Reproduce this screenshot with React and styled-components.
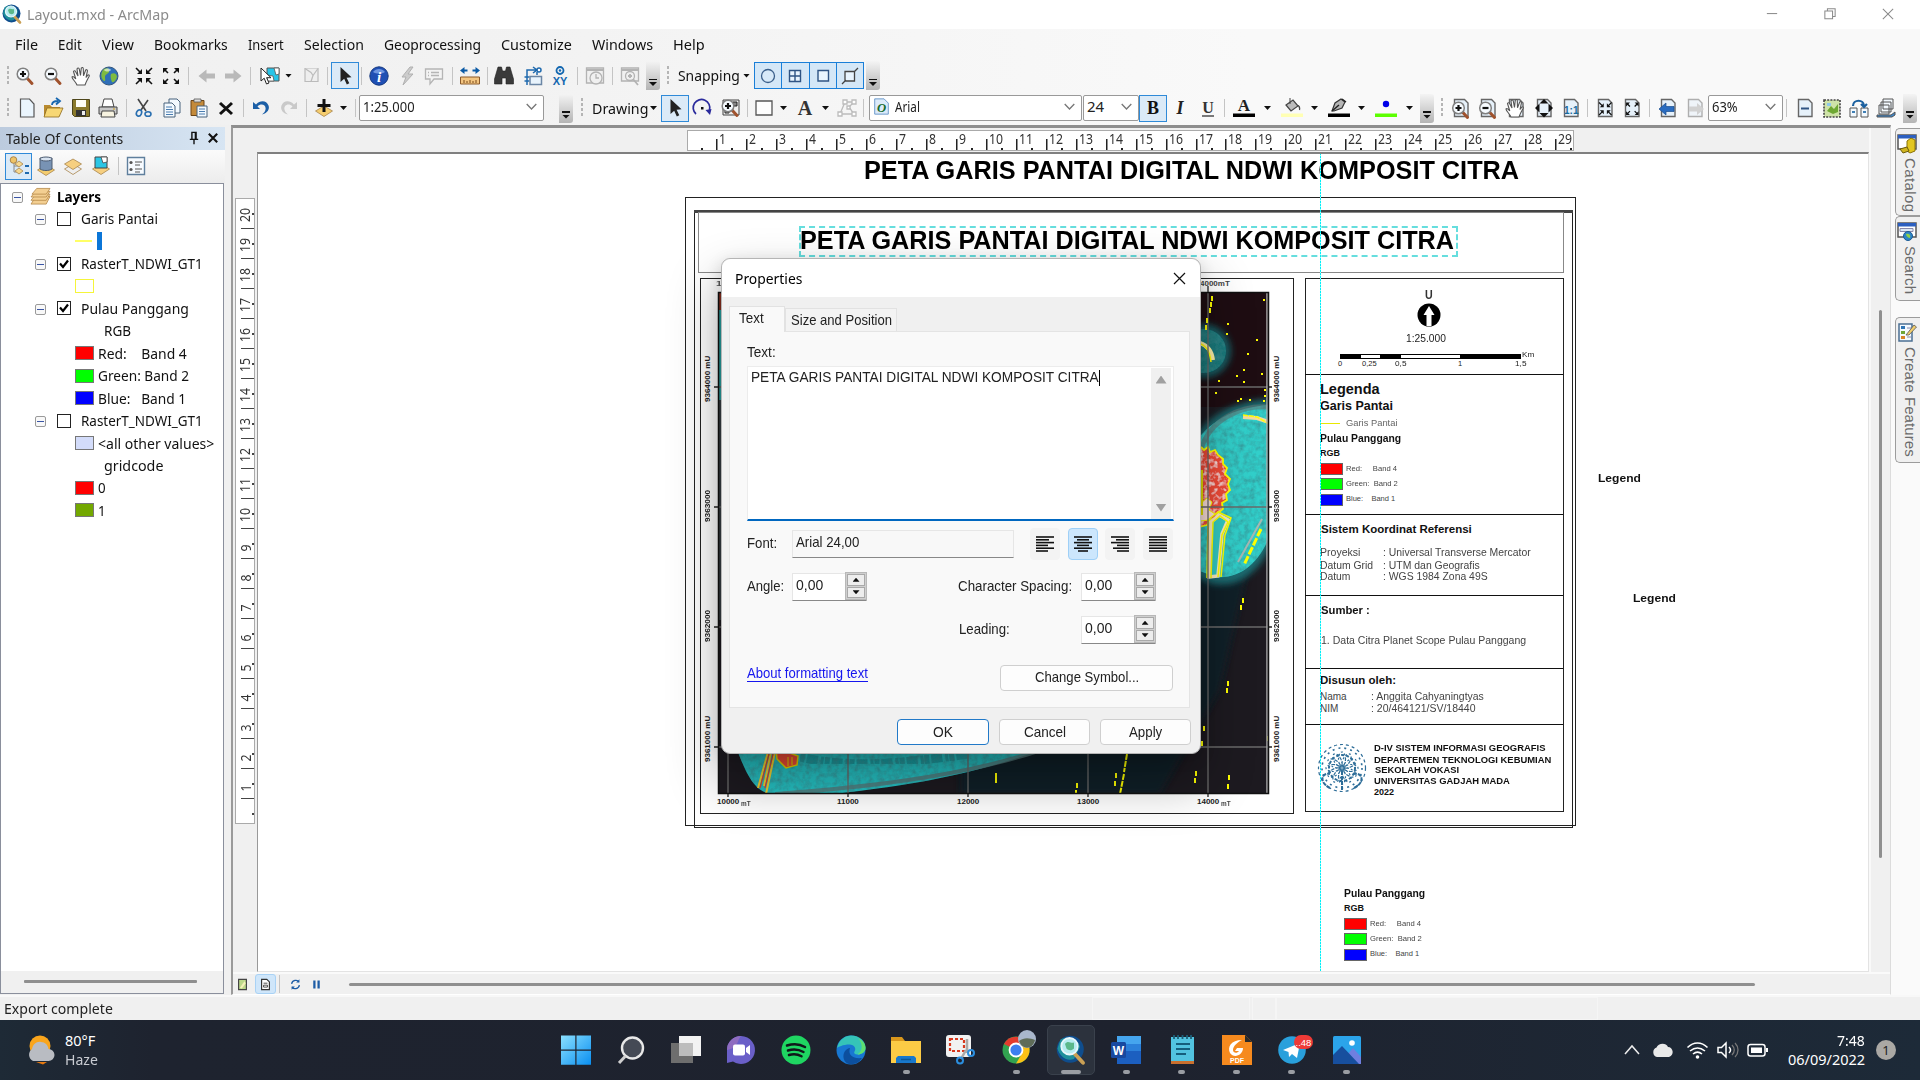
import React, { useLayoutEffect, useRef, useState } from "react";
import styled, { createGlobalStyle, css } from "styled-components";

const UI = `"Noto Sans", "Open Sans", sans-serif`;
const ARIAL = `"Liberation Sans", Arial, sans-serif`;

const Global = createGlobalStyle`
  html, body { margin: 0; padding: 0; overflow: hidden; }
  body { width: 1920px; height: 1080px; font-family: ${UI}; font-size: 15px; color: #111; }
  * { box-sizing: border-box; }
`;

/* ---------- text squeezed to a known width ---------- */
const FitBox = styled.span`
  display: inline-block;
  flex: none;
  white-space: pre;
  line-height: 1;
`;
const FitInner = styled.span`
  display: inline-block;
  white-space: pre;
  transform-origin: 0 50%;
`;
function Fit({ w, children }) {
  const ref = useRef(null);
  const [k, setK] = useState(1);
  useLayoutEffect(() => {
    const n = ref.current.offsetWidth;
    if (n) setK(w / n);
  }, [w, children]);
  return (
    <FitBox style={{ width: w }}>
      <FitInner ref={ref} style={{ transform: `scaleX(${k})` }}>{children}</FitInner>
    </FitBox>
  );
}

/* ---------- icons ---------- */
const page = <path d="M3.5 1.5h10l3.5 3.500v13.500h-13.500z" fill="#e6f1fa" stroke="#666" strokeWidth="1.400" />;
const lens = (x, y, sign) => (
  <g>
    <path d={`M${x + 3.5} ${y + 3.5}l5.500 6`} stroke="#a0522d" strokeWidth="3" strokeLinecap="round" />
    <circle cx={x} cy={y} r="5.800" fill="#f6fbff" stroke="#808080" strokeWidth="1.500" />
    <path d={`M${x - 3} ${y}h6${sign ? `M${x} ${y - 3}v6` : ""}`} stroke="#111" strokeWidth="2.200" />
  </g>
);
const arrowsIn = (c) => (
  <g stroke={c} strokeWidth="1.600" fill={c}>
    <path d="M2 2l4 4M18 2l-4 4M2 18l4-4M18 18l-4-4" />
    <path d="M8 3v5H3zM12 3v5h5zM8 17v-5H3zM12 17v-5h5z" stroke="none" />
  </g>
);
const arrowsOut = (c) => (
  <g stroke={c} strokeWidth="1.600" fill={c}>
    <path d="M7 7L3.500 3.500M13 7l3.500-3.500M7 13l-3.500 3.500M13 13l3.500 3.500" />
    <path d="M2 7V2h5zM18 7V2h-5zM2 13v5h5zM18 13v5h-5z" stroke="none" />
  </g>
);
const hand = <path d="M6 19c-1-3-5-6-5-8 1-1 2 0 3.800 2L2.500 5.500c.8-1.400 1.800-.6 2.200.3L7 10 6 3c.7-1.600 2-1.300 2.300.2L9.500 9.500l.8-7.300c.9-1.200 2-.6 2 .7l.2 6.800 2.200-5.700c1-.9 2 0 1.700 1.200L15 11.500l2-2.500c1-.5 1.600.3 1.200 1.200-1.500 2.800-3 5.300-4.200 8.800z" fill="#fff" stroke="#555" strokeWidth="1.100" />;
const diamond = (y, f) => <path d={`M10 ${y - 5}l8.500 5-8.500 5.500-8.500-5.500z`} fill={f} stroke="#a8854c" strokeWidth="0.800" />;
const pointer = <path d="M5.500 1v15l3.700-3.300 2.600 5.800 2.500-1.200-2.700-5.600 4.900-.5z" fill="#222" />;

const G = {
  zoomIn: lens(8, 8, 1),
  zoomOut: lens(8, 8, 0),
  hand,
  globe: <g><circle cx="10" cy="10" r="9" fill="#2f6fb8" stroke="#33567e" /><path d="M5 3c3-2 6 0 5 3-1 2-4 2-4 5 0 2 1 4-1 4-3-2-4-8 0-12zM12 8c3-2 6 0 6 3-1 3-3 6-5 5-1-2-2-6-1-8z" fill="#7fbb40" /><path d="M5 4c2-2 6-2 7 0-2 2-5 2-7 0z" fill="#fff" opacity=".6" /></g>,
  shrink: arrowsIn("#111"),
  expand: arrowsOut("#111"),
  back: <path d="M1.500 10l8-6.500v4h8.500v5H9.500v4z" fill="#b9b9b9" />,
  fwd: <path d="M18.500 10l-8-6.500v4H2v5h8.500v4z" fill="#b9b9b9" />,
  selFeat: <g><path d="M7 2h12v13H7z" fill="#27c4e8" stroke="#555" /><path d="M14 2l5 0v6l-3 1zM7 9l6 1 1 5H7z" fill="#fff" stroke="#555" strokeWidth=".8" /><path d="M1 2v13l3.200-2.800L6.500 18l2.500-1-2.400-5.300H11z" fill="#fff" stroke="#222" /></g>,
  clear: <g fill="#eee" stroke="#bbb" strokeWidth="1.200"><path d="M4 2.500h13v13H4z" /><path d="M4 2.500l6 4 2 3 5-7M12 9.500l-2 6" /></g>,
  pointer,
  info: <g><circle cx="10" cy="10" r="9.200" fill="#1f4fb4" stroke="#15387f" /><path d="M4 6c3-4 9-4 12 0-3 2-9 2-12 0z" fill="#6d95e0" /><text x="10" y="15.500" fontSize="15" fontStyle="italic" fontWeight="bold" fill="#fff" textAnchor="middle" fontFamily="Liberation Serif">i</text></g>,
  bolt: <path d="M12 1L4 11h4l-3 8 10-11h-5l5-7z" fill="#ccc" stroke="#b0b0b0" />,
  popup: <g fill="#f3f3f3" stroke="#b5b5b5" strokeWidth="1.300"><path d="M1.500 3h17v10H10l-4 5v-5H1.500z" /><path d="M7 6.500h8M7 9.500h8M4 6.500h1M4 9.500h1" /></g>,
  measure: <g><path d="M0 4.500L4.500 1v2.500h3v2h-3V8zM20 4.500L15.500 1v2.500h-3v2h3V8z" fill="#0b5aa5" /><path d="M.5 11h19v7H.5z" fill="#f3c581" stroke="#8b5a2b" /><path d="M4 17v-3M7 17v-2M10 17v-3M13 17v-2M16 17v-3" stroke="#7a4a1b" /></g>,
  bino: <path d="M4 1h3.500l1 4h3l1-4H16l3.500 12v5H12v-6H8v6H.5v-5z" fill="#3a3a3a" stroke="#222" strokeWidth=".6" />,
  goTo: <g fill="none" stroke="#1f6aae" strokeWidth="1.500"><path d="M4 19V4h9M10 1l4 3-4 3M14 9V6M1.500 11h5M1.500 15h5" /><circle cx="16" cy="4" r="2" fill="#fff" /><path d="M7 10.500h11.500v8H7z" fill="#e8f3fc" stroke="#6b86a5" /></g>,
  xy: <g><circle cx="10" cy="4.500" r="3.500" fill="none" stroke="#1367b0" strokeWidth="1.800" /><circle cx="10" cy="4.500" r="1.200" fill="#1367b0" /><text x="10" y="19" fontSize="11" fontWeight="bold" fill="#1367b0" textAnchor="middle" fontFamily="Liberation Sans">XY</text></g>,
  clock: <g fill="#f0f0f0" stroke="#b3b3b3" strokeWidth="1.300"><path d="M1.500 2h17v15h-17z" /><path d="M1.500 4h17" strokeWidth="2" /><circle cx="11" cy="12" r="6" /><path d="M11 8v4h3" /></g>,
  viewer: <g fill="#f0f0f0" stroke="#b3b3b3" strokeWidth="1.300"><path d="M1.500 2h17v13h-17z" /><path d="M1.500 4h17" strokeWidth="2" /><circle cx="10" cy="10" r="4.500" /><path d="M13 13l5 6M8 10h4M10 8v4" strokeWidth="1.800" /></g>,
  snCircle: <circle cx="10" cy="10" r="6.500" fill="#d7e9f8" stroke="#3b5f8a" strokeWidth="1.300" />,
  snGrid: <path d="M4.500 4.500h11v11h-11zM10 4.500v11M4.500 10h11" fill="#e8f4fe" stroke="#2f5484" strokeWidth="1.400" />,
  snSquare: <path d="M5 4.500h10.500V15H5z" fill="#e8f4fe" stroke="#2f5484" strokeWidth="1.400" />,
  snEdge: <path d="M5 5.500h9.500V15H5zM2 18l4-4M14 6l4-4" fill="#e8f4fe" stroke="#444" strokeWidth="1.300" />,
  newDoc: <path d="M3.500 1h9l4.500 5v13h-13.500z" fill="#eaf5fd" stroke="#555" strokeWidth="1.200" />,
  open: <g><path d="M1 7h6l2 2h8v9H1z" fill="#b98a2e" /><path d="M4 10h16l-4 9H1z" fill="#f7d774" stroke="#8d6a1e" strokeWidth=".8" /><path d="M9 7c0-3 2-4 6-4M13 0l4 3-4 3.500" fill="none" stroke="#1767b0" strokeWidth="1.800" /></g>,
  save: <g><path d="M1.500 1.500h17v17h-15l-2-2z" fill="#8a7a2b" stroke="#4d451a" /><path d="M5 2h10v7H5z" fill="#fdfdf5" /><path d="M5 12h10v6H5z" fill="#333" /><path d="M11 13h3v4h-3z" fill="#eee" /></g>,
  print: <g stroke="#444"><path d="M6 1h8l2 8H4z" fill="#fff" /><path d="M1 9h18v7H1z" fill="#c8c8c8" /><path d="M4 13h12l1 6H3z" fill="#f7f3e0" /><circle cx="16" cy="11" r=".8" fill="#c90" stroke="none" /></g>,
  cut: <g fill="none" stroke="#444" strokeWidth="1.600"><path d="M4 1l8 12M14 2L7 12" /><ellipse cx="5" cy="15" rx="2.500" ry="3.200" stroke="#2a6fb0" transform="rotate(25 5 15)" /><ellipse cx="14" cy="16" rx="3" ry="2.300" stroke="#2a6fb0" /></g>,
  copy: <g fill="#f3f9fe" stroke="#49627c"><path d="M7 1h8l3 3v11H7z" /><path d="M2 5h8l3 3v11H2z" /><path d="M4 9h6M4 11.500h7M4 14h7M4 16.500h7" stroke="#4a7db0" /></g>,
  paste: <g><path d="M2 2.500h13v15H2z" fill="#c48a3a" stroke="#6d4516" /><path d="M5 1h7v3H5z" fill="#ddd" stroke="#555" strokeWidth=".8" /><path d="M8 8h10v11H8z" fill="#f3f9fe" stroke="#49627c" /><path d="M10 11h6M10 13.500h6M10 16h6" stroke="#4a7db0" /></g>,
  del: <path d="M4 5l12 11M16 5L4 16" stroke="#111" strokeWidth="3" />,
  undo: <path d="M2 4v7h7l-2.500-2.500c4-4 9-1 8 3-.4 2-1.500 3.500-3.500 5 5-1 8-5 6.500-9C15.500 2 9 2 5 6.500z" fill="#1c5fa6" />,
  redo: <path d="M18 4v7h-7l2.500-2.500c-4-4-9-1-8 3 .4 2 1.500 3.500 3.500 5-5-1-8-5-6.500-9C4.500 2 11 2 15 6.500z" fill="#c9c9c9" />,
  addData: <g>{diamond(13, "#f5cd6e")}<path d="M10 1v13M3.500 7.500h13" stroke="#111" strokeWidth="3" /></g>,
  rotate: <g fill="none" stroke="#2a2a9c" strokeWidth="1.700"><path d="M4 16A8.300 8.300 0 1 1 17.500 12" /><path d="M13.500 12l4.500 5 1.500-6z" fill="#2a2a9c" stroke="none" /><path d="M9 9h2.500v2.500H9z" fill="#111" stroke="none" /></g>,
  zoomSel: <g><path d="M2 2h16v15H2z" fill="#eee" stroke="#444" /><path d="M12 4h4v4h-4zM4 12h4v3H4z" fill="#888" stroke="#222" /><g transform="translate(-1 0)">{lens(8, 8, 1)}</g></g>,
  rect: <path d="M2 3h16v14H2z" fill="#fdfdfd" stroke="#555" strokeWidth="1.300" />,
  bigA: <text x="10" y="17" fontSize="20" fontWeight="bold" fill="#333" textAnchor="middle" fontFamily="Liberation Serif">A</text>,
  verts: <g fill="#fff" stroke="#bcbcbc" strokeWidth="1.300"><path d="M3 16L8 4h9M17 4l-5 5 5 7H3" fill="none" /><path d="M1 14h4v4H1zM6 2h4v4H6zM15 2h4v4h-4zM10 8h3v3h-3zM15 14h4v4h-4z" /></g>,
  bold: <text x="10" y="16" fontSize="18" fontWeight="bold" fill="#111" textAnchor="middle" fontFamily="Liberation Serif">B</text>,
  italic: <text x="10" y="16" fontSize="18" fontWeight="bold" fontStyle="italic" fill="#222" textAnchor="middle" fontFamily="Liberation Serif">I</text>,
  under: <g><text x="10" y="15" fontSize="16" fontWeight="bold" fill="#333" textAnchor="middle" fontFamily="Liberation Serif">U</text><path d="M4 18h12" stroke="#333" strokeWidth="1.300" /></g>,
  fontColor: <g><text x="10" y="13" fontSize="17" fontWeight="bold" fill="#222" textAnchor="middle" fontFamily="Liberation Serif">A</text><path d="M-1 15.500h22v3.500H-1z" fill="#000" /></g>,
  fillColor: <g><path d="M4 7l7-5 5 6-7 5zM15 7c3 1 3 3 2.500 5" fill="#bbb" stroke="#444" strokeWidth="1.200" /><path d="M8 0v6" stroke="#444" /><path d="M-1 15.500h22v3.500H-1z" fill="#ffffb4" /></g>,
  lineColor: <g><path d="M3 13l3-8 6-4 4 3-3 6-8 3z" fill="#b5b5b5" stroke="#333" strokeWidth="1.200" /><path d="M3 13l7-6M13 1l4 3" stroke="#222" strokeWidth="1.500" /><path d="M-1 15.500h22v3.500H-1z" fill="#000" /></g>,
  markColor: <g><circle cx="10" cy="6" r="3.200" fill="#0000e8" /><path d="M-1 15.500h22v3.500H-1z" fill="#5cff00" /></g>,
  pgIn: <g>{page}{lens(7.5, 10, 1)}</g>,
  pgOut: <g>{page}{lens(7.5, 10, 0)}</g>,
  pgHand: <g>{page}<g transform="translate(-1 0)">{hand}</g></g>,
  pgFull: <g>{page}<path d="M10 1l4.500 4.500h-9zM10 19.500l4.500-4.500h-9zM1 10l4.500-4.500v9zM19 10l-4.500-4.500v9z" fill="#111" /></g>,
  pgOne: <g>{page}<text x="10.300" y="15.500" fontSize="10" fontWeight="bold" fill="#1a6a9c" textAnchor="middle" fontFamily="Liberation Sans">1:1</text></g>,
  pgShrink: <g>{page}<g transform="translate(2.500 3) scale(.78)">{arrowsIn("#111")}</g></g>,
  pgExpand: <g>{page}<g transform="translate(2.500 3) scale(.78)">{arrowsOut("#111")}</g></g>,
  pgBack: <g>{page}<path d="M1 11l7-6v3.500h8v5H8V17z" fill="#2a6cc0" stroke="#174a8c" strokeWidth=".7" /></g>,
  pgFwd: <g opacity=".5">{page}<path d="M19 11l-7-6v3.500H4v5h8V17z" fill="#aaa" /></g>,
  draft: <g>{page}<path d="M6 10.500h8" stroke="#2f5484" strokeWidth="2" /></g>,
  focus: <g><path d="M2 2h16v17H2z" fill="#cfe3a8" stroke="#444" strokeDasharray="2 1.200" strokeWidth="1.600" /><path d="M5 13l4-5 3 3 4-5v8l-5 2z" fill="#6ea832" /><path d="M5 5h4v3H5z" fill="#8fc8ec" /></g>,
  change: <g><path d="M1 10h7v9H1zM12 10h7v9h-7z" fill="#f3f9fe" stroke="#555" /><path d="M4 8c0-7 11-7 11 0M12 6l3 3 3-3" fill="none" stroke="#1b609f" strokeWidth="2.200" /><path d="M3 14h3M14 14h3" stroke="#3f7fb5" strokeWidth="2" /></g>,
  ddp: <g fill="#f3f9fe" stroke="#555"><path d="M7 1h10v10H7zM5 4h10v10H5zM3 7h10v9H3z" /><path d="M1 17h14l4-3v3l-3 2H1z" fill="#3c86c9" /></g>,
  fontDoc: <g><path d="M2 1h11l5 5v13H2z" fill="#dceafa" stroke="#5a8cc4" /><text x="10" y="16" fontSize="15" fontStyle="italic" fontWeight="bold" fill="#166a2c" textAnchor="middle" fontFamily="Liberation Serif">O</text></g>,
  tocOrder: <g><path d="M5 4v12h5M5 10h5" stroke="#888" fill="none" /><circle cx="4.500" cy="4" r="3.300" fill="#f0c467" stroke="#a8854c" /><path d="M10 5l4 3-4 3-4-3zM10 12l4 3-4 3-4-3z" fill="#f7d88f" stroke="#a8854c" strokeWidth=".8" /><path d="M16 10h4M16 17h4" stroke="#1f6aae" strokeWidth="1.800" /></g>,
  tocSource: <g>{diamond(14, "#f5cd6e")}<path d="M4 2h12v11c-3 2-9 2-12 0z" fill="#7893b4" stroke="#4d5d73" /><ellipse cx="10" cy="3" rx="6" ry="2" fill="#d8e3f0" stroke="#4d5d73" /></g>,
  tocVis: <g>{diamond(13, "#eee")}{diamond(8, "#f6cf80")}</g>,
  tocSel: <g>{diamond(13, "#f6cf80")}<path d="M4 1h12v11H4z" fill="#2cc6e4" stroke="#444" /><path d="M10 1h6v5l-4 1z" fill="#fff" stroke="#444" strokeWidth=".8" /></g>,
  tocOpt: <g><path d="M1.500 1.500h17v17h-17z" fill="#f7fbff" stroke="#5f7f9d" strokeWidth="1.400" /><path d="M9 6h7M9 9h5M9 13h7M9 16h5" stroke="#555" /><circle cx="5" cy="6.500" r="1.600" fill="#555" /><circle cx="5" cy="13.500" r="1.600" fill="#555" /></g>,
  layers: <g fill="#f3cf92" stroke="#b28443" strokeWidth=".8"><path d="M5 10h15l-4 8H0z" /><path d="M5 7.500h15l-4 6.500H0z" /><path d="M5 4.500h15l-4 6H0z" /><path d="M6 1.500h14l-4 6H1z" /></g>,
  pin: <path d="M6 1h8v10h2v2h-5v6H9v-6H4v-2h2zM8 3v8h3V3z" fill="#111" fillRule="evenodd" />,
  closeX: <path d="M4 4l12 12M16 4L4 16" stroke="#111" strokeWidth="3" />,
  arcmap: <g><circle cx="9.500" cy="9.500" r="9" fill="#0f4d8d" /><path d="M3 3c5-3 12 0 13 5l-4 8c-6 2-10-3-11-7z" fill="#1e8f9b" /><path d="M12 12l6 6.500" stroke="#caa055" strokeWidth="2.600" strokeLinecap="round" /><circle cx="9" cy="7.500" r="5.500" fill="#b6ecf0" stroke="#e8f6fa" strokeWidth="1.200" /><path d="M6 6c2-3 4 0 6-1v4c-2 2-4 1-5 0z" fill="#5bb88a" /></g>,
  catalog: <g><path d="M1 2h18v14H1z" fill="#fff" stroke="#555" strokeWidth="1.500" /><path d="M1 2h18v3.500H1z" fill="#2c5fc0" /><path d="M10 8l4-3 4 2v11l-5 2-3-2z" fill="#e3c61f" stroke="#8a7206" /><path d="M3 16l7-2 2 4-6 2z" fill="#d0b520" stroke="#6d5b0a" /></g>,
  searchTab: <g><path d="M1 2h18v14H1z" fill="#fff" stroke="#555" strokeWidth="1.500" /><path d="M1 2h18v3.500H1z" fill="#2c5fc0" /><path d="M3 7.500h13v3H3z" fill="#dce8f5" stroke="#88a" /><circle cx="11" cy="15" r="4.500" fill="#2f86c6" stroke="#1b5a94" /><path d="M9 13c3-1 5 1 4 4-2 0-4-2-4-4z" fill="#8fd14a" /></g>,
  create: <g><path d="M2 2h13v17H2z" fill="#f4faff" stroke="#4b6f92" strokeWidth="1.500" /><path d="M4 4h4v3H4z" fill="#2f75b5" /><path d="M4 9h4v3H4z" fill="#6fa536" /><path d="M4 14h4v3H4z" fill="#d8842a" /><path d="M10 6h4M10 15h4" stroke="#88a" /><path d="M9 13l8-10 2.500 2L12 13z" fill="#f2cf6e" stroke="#555" strokeWidth=".8" /></g>,
  dataView: <g><path d="M4 2h12v16H4z" fill="#bcd98a" stroke="#444" strokeWidth="1.800" /><path d="M6 15l7-10 2 3-6 8z" fill="#f5f2b8" /></g>,
  layoutView: <g><path d="M4 2h8l4 4v12H4z" fill="#fff" stroke="#333" strokeWidth="1.800" /><path d="M7 8h6M7 14h6v-3H7z" stroke="#333" strokeWidth="1.300" fill="none" /></g>,
  refresh: <g fill="none" stroke="#1d5ca5" strokeWidth="2"><path d="M4 9c1-6 9-7 11-3M16 11c-1 6-9 7-11 3" /><path d="M16 2v5h-5zM4 18v-5h5z" fill="#1d5ca5" stroke="none" /></g>,
  pause: <path d="M5 4h3.500v12H5zM11.500 4H15v12h-3.500z" fill="#1d5ca5" />,
};
const Svg = styled.svg`
  flex: none;
  display: block;
  overflow: visible;
`;
const Icon = ({ n, s = 20 }) => <Svg width={s} height={s} viewBox="0 0 20 20" fill="none">{G[n]}</Svg>;

/* ---------- shell ---------- */
const Shell = styled.div`
  width: 1920px;
  height: 1080px;
  display: flex;
  flex-direction: column;
  background: #f0f0f0;
  position: relative;
  overflow: hidden;
`;
const TitleBar = styled.div`
  height: 29px;
  background: #fff;
  display: flex;
  align-items: center;
  padding: 0 26px 1px 2px;
  color: #8b8b8b;
  gap: 5px;
`;
const WinButtons = styled.div`
  margin-left: auto;
  display: flex;
  gap: 46px;
`;
const Top = styled.div`
  height: 96px;
  background: linear-gradient(90deg, #f0f0f0 0, #f2f2f2 25%, #f9f9f9 65%);
`;
const MenuBar = styled.div`
  height: 31px;
  display: flex;
  align-items: center;
  gap: 20px;
  padding: 0 0 1px 15px;
`;
const ToolRow = styled.div`
  height: ${(p) => p.$h}px;
  display: flex;
  align-items: center;
  padding-left: 7px;
`;
const Slot = styled.span`
  flex: none;
  display: flex;
  align-items: center;
  justify-content: center;
  margin-left: ${(p) => p.$g || 0}px;
  width: ${(p) => (p.$w ? `${p.$w}px` : "auto")};
`;
const Pressed = styled(Slot)`
  height: 27px;
  background: #dbeaf7;
  border: 1px solid #2f8ad8;
`;
const Sep = styled.span`
  flex: none;
  width: 1px;
  height: 18px;
  background: #c4c4c4;
  margin-left: ${(p) => p.$g}px;
`;
const GripBox = styled.span`
  flex: none;
  width: 4px;
  height: 20px;
  margin-left: ${(p) => p.$g || 0}px;
  background: repeating-linear-gradient(#b5b5b5 0 3px, transparent 3px 5px);
  background-size: 2px 100%;
  background-repeat: no-repeat;
`;
const CaretMark = styled.span`
  flex: none;
  width: 7px;
  height: 4px;
  margin-left: ${(p) => p.$g}px;
  background: #111;
  clip-path: polygon(0 0, 100% 0, 50% 100%);
`;
const OverflowBox = styled.span`
  flex: none;
  width: 14px;
  height: 29px;
  margin-left: ${(p) => p.$g}px;
  background: linear-gradient(#f4f4f4, #b4b4b4);
  border-radius: 0 3px 3px 0;
  display: flex;
  flex-direction: column;
  align-items: center;
  justify-content: flex-end;
  padding-bottom: 4px;
  gap: 2px;
  &::before { content: ""; width: 8px; height: 1.5px; background: #111; }
  &::after { content: ""; width: 8px; height: 4px; background: #111; clip-path: polygon(0 0, 100% 0, 50% 100%); }
`;
const MoreMark = styled.svg`
  margin-bottom: 6px;
`;
const Combo = styled.span`
  flex: none;
  height: 26px;
  width: ${(p) => p.$w}px;
  margin-left: ${(p) => p.$g}px;
  background: #fff;
  border: 1px solid #999;
  border-radius: 2px;
  display: flex;
  align-items: center;
  gap: 5px;
  padding: 0 6px 3px 3px;
  color: #222;
`;
const Chevron = () => (
  <Svg width="11" height="7" viewBox="0 0 11 7" fill="none" style={{ marginLeft: "auto" }}>
    <path d="M.7 1l4.800 5 4.800-5" stroke="#777" strokeWidth="1.300" />
  </Svg>
);
const SnapGroup = styled.span`
  flex: none;
  display: flex;
  width: 110px;
  height: 27px;
  margin-left: 4px;
  border: 1px solid #1a7fd8;
  background: #d4e7f7;
`;
const SnapCell = styled.span`
  flex: 1;
  display: flex;
  align-items: center;
  justify-content: center;
  & + & { border-left: 1px solid #1a7fd8; }
`;

const I = (n, g) => <Slot key={n + g} $g={g} $w={20}><Icon n={n} /></Slot>;

function ToolbarOne() {
  return (
    <ToolRow $h={31}>
      <GripBox />{I("zoomIn", 4)}{I("zoomOut", 8)}{I("hand", 8)}{I("globe", 8)}<Sep $g={7} />
      {I("shrink", 7)}{I("expand", 7)}<Sep $g={7} />{I("back", 8)}{I("fwd", 6)}<Sep $g={7} />
      {I("selFeat", 9)}<CaretMark $g={5} />{I("clear", 9)}<Sep $g={6} />
      <Pressed $g={3} $w={28}><Icon n="pointer" /></Pressed><Sep $g={2} />
      {I("info", 7)}{I("bolt", 9)}{I("popup", 6)}<Sep $g={8} />{I("measure", 7)}<Sep $g={7} />
      {I("bino", 6)}{I("goTo", 9)}{I("xy", 7)}<Sep $g={7} />{I("clock", 7)}<Sep $g={7} />{I("viewer", 7)}
      <OverflowBox $g={6} /><GripBox $g={7} />
      <Slot $g={7}><Fit w={62}>Snapping</Fit></Slot><CaretMark $g={3} />
      <SnapGroup>
        {["snCircle", "snGrid", "snSquare", "snEdge"].map((n) => <SnapCell key={n}><Icon n={n} /></SnapCell>)}
      </SnapGroup>
      <OverflowBox $g={2} />
    </ToolRow>
  );
}
function ToolbarTwo() {
  return (
    <ToolRow $h={34}>
      <GripBox />{I("newDoc", 6)}{I("open", 6)}{I("save", 8)}{I("print", 7)}<Sep $g={8} />
      {I("cut", 7)}{I("copy", 8)}{I("paste", 7)}{I("del", 7)}<Sep $g={7} />{I("undo", 7)}{I("redo", 8)}<Sep $g={7} />
      {I("addData", 7)}<CaretMark $g={6} /><Sep $g={8} />
      <Combo $g={3} $w={185}><Fit w={52}>1:25.000</Fit><Chevron /></Combo>
      <OverflowBox $g={15}>
      </OverflowBox><GripBox $g={8} />
      <Slot $g={7}><Fit w={56}>Drawing</Fit></Slot><CaretMark $g={2} />
      <Pressed $g={4} $w={28}><Icon n="pointer" /></Pressed>{I("rotate", 3)}{I("zoomSel", 9)}<Sep $g={6} />
      {I("rect", 6)}<CaretMark $g={6} />{I("bigA", 8)}<CaretMark $g={7} />{I("verts", 8)}<Sep $g={6} />
      <Combo $g={5} $w={213}><Icon n="fontDoc" s={17} /><Fit w={25}>Arial</Fit><Chevron /></Combo>
      <Combo $g={1} $w={56}><Fit w={17}>24</Fit><Chevron /></Combo>
      <Pressed $g={0} $w={28}><Icon n="bold" /></Pressed>{I("italic", 3)}{I("under", 8)}<Sep $g={6} />
      {I("fontColor", 9)}<CaretMark $g={10} />{I("fillColor", 11)}<CaretMark $g={9} />
      {I("lineColor", 11)}<CaretMark $g={9} />{I("markColor", 11)}<CaretMark $g={10} />
      <OverflowBox $g={7} /><GripBox $g={7} />
      {I("pgIn", 6)}{I("pgOut", 7)}{I("pgHand", 8)}{I("pgFull", 8)}{I("pgOne", 7)}<Sep $g={6} />
      {I("pgShrink", 7)}{I("pgExpand", 7)}<Sep $g={7} />{I("pgBack", 8)}{I("pgFwd", 7)}
      <Combo $g={3} $w={75}><Fit w={26}>63%</Fit><Chevron /></Combo><Sep $g={3} />
      {I("draft", 8)}{I("focus", 7)}{I("change", 7)}{I("ddp", 7)}<OverflowBox $g={7} />
    </ToolRow>
  );
}

/* ---------- table of contents ---------- */
const Main = styled.div`
  flex: none;
  height: 870px;
  display: flex;
`;
const Toc = styled.div`
  width: 225px;
  display: flex;
  flex-direction: column;
  padding-top: 2px;
`;
const TocHead = styled.div`
  height: 23px;
  display: flex;
  align-items: center;
  padding: 0 5px 1px 6px;
  background: linear-gradient(90deg, #bccbde, #d7e5f3);
  color: #222;
`;
const TocTools = styled.div`
  height: 33px;
  display: flex;
  align-items: center;
  padding: 0 0 1px 5px;
  background: linear-gradient(#fbfbfb, #ececec);
`;
const TocBox = styled.div`
  width: 224px;
  height: 811px;
  border: 1px solid #8a8f9c;
  background: #fff;
  display: flex;
  flex-direction: column;
`;
const Tree = styled.div`
  flex: 1;
  padding-top: 1px;
`;
const TreeRow = styled.div`
  height: 22.45px;
  display: flex;
  align-items: center;
  padding-left: ${(p) => p.$pl}px;
`;
const TocScroll = styled.div`
  height: 22px;
  background: #f0f0f0;
  padding: 9px 26px 0 23px;
  &::before { content: ""; display: block; height: 3px; background: #8f8f8f; border-radius: 1px; }
`;
const Expander = styled.span`
  flex: none;
  width: 11px;
  height: 11px;
  margin-top: 2px;
  border: 1px solid #9a9a9a;
  border-radius: 2px;
  background: #f8f8f8;
  display: flex;
  align-items: center;
  justify-content: center;
  &::before { content: ""; width: 7px; height: 1px; background: #3a55a5; }
`;
const Check = styled.span`
  flex: none;
  width: 14px;
  height: 14px;
  border: 1px solid #222;
  margin: 0 10px 0 11px;
  display: flex;
`;
const Swatch = styled.span`
  flex: none;
  width: 19px;
  height: 14px;
  background: ${(p) => p.$c};
  border: 1px solid ${(p) => p.$b || "#777"};
  margin-right: 4px;
`;
const LineSym = styled.span`
  width: 17px;
  height: 2px;
  background: #ffff66;
  margin-right: 5px;
`;
const EditMark = styled.span`
  width: 5px;
  height: 18px;
  background: #0b76d8;
`;
const Bold = styled.span`
  font-weight: 700;
  color: #000;
  margin-left: 7px;
  display: inline-flex;
`;
const Layer = ({ label, w, on }) => (
  <TreeRow $pl={34}>
    <Expander />
    <Check>{on && <Svg width="12" height="12" viewBox="0 0 12 12" fill="none"><path d="M2 5.500l3 3.500 5-6.500" stroke="#000" strokeWidth="2.200" /></Svg>}</Check>
    <Fit w={w}>{label}</Fit>
  </TreeRow>
);
const Sw = ({ c, label, w }) => (
  <TreeRow $pl={74}><Swatch $c={c} /><Fit w={w}>{label}</Fit></TreeRow>
);

/* ---------- map view ---------- */
const View = styled.div`
  width: 1660px;
  height: 870px;
  margin-left: 6px;
  border-left: 2px solid #9a9a9a;
  border-top: 3px solid #8e8e8e;
  border-right: 1px solid #dcdcdc;
  border-bottom: 1px solid #fff;
  display: grid;
  grid-template-columns: 24px 1612px 1fr;
  grid-template-rows: 24px 820px 1fr;
`;
const HRulerWrap = styled.div`
  grid-column: 2;
  padding: 2px 0 0 430px;
`;
const HRuler = styled.div`
  width: 887px;
  height: 21px;
  border: 1px solid #aaa;
  background: #fff;
  display: flex;
  overflow: hidden;
`;
const HCell = styled.span`
  flex: none;
  width: ${(p) => p.$w || 29.98}px;
  display: flex;
  align-items: flex-start;
  padding: 1px 0 0 1px;
  font-size: 14px;
  color: #333;
  ${(p) => p.$major && css`background: linear-gradient(#222, #222) 0 100% / 1.5px 11px no-repeat, linear-gradient(#222, #222) 15px 100% / 2px 2px no-repeat;`}
  ${(p) => !p.$major && css`background: linear-gradient(#222, #222) 13px 100% / 2px 2px no-repeat;`}
`;
const VRulerWrap = styled.div`
  grid-row: 2;
  grid-column: 1;
  padding: 46px 0 0 2px;
`;
const VRuler = styled.div`
  width: 20px;
  height: 626px;
  border: 1px solid #aaa;
  background: #fff;
  display: flex;
  flex-direction: column;
`;
const VCell = styled.span`
  height: ${(p) => p.$h || 30}px;
  flex: none;
  display: flex;
  align-items: center;
  justify-content: center;
  padding-top: ${(p) => (p.$one ? 8 : 1)}px;
  font-size: 14px;
  color: #333;
  background: linear-gradient(#444, #444) 100% 14px / 2px 2px no-repeat
    ${(p) => (p.$h ? "" : ", linear-gradient(#444,#444) 5px 100% / 13px 1.500px no-repeat")};
`;
const Turned = styled.span`
  transform: rotate(-90deg);
  display: flex;
`;
const Canvas = styled.div`
  grid-row: 2;
  grid-column: 2;
  background: #fff;
  border-left: 1px solid #999;
  border-top: 2px solid #808080;
  border-right: 1px solid #e3e3e3;
  border-bottom: 1px solid #e3e3e3;
  position: relative;
  overflow: hidden;
`;
/* The page layer keeps screen units, so its origin is the window corner. */
const PageLayer = styled.div`
  position: absolute;
  left: -258px;
  top: -154px;
  width: 1920px;
  height: 1080px;
  font-family: ${ARIAL};
`;
const Frame = styled.div`
  position: absolute;
  left: ${(p) => p.$x}px;
  top: ${(p) => p.$y}px;
  width: ${(p) => p.$w}px;
  height: ${(p) => p.$h}px;
  border: ${(p) => p.$b || "1px solid #222"};
  background: ${(p) => p.$f || "transparent"};
`;
const Label = styled.div`
  position: absolute;
  left: ${(p) => p.$x}px;
  top: ${(p) => p.$y}px;
  transform: translateY(-50%);
  font-size: ${(p) => p.$s}px;
  font-weight: ${(p) => (p.$bold ? 700 : 400)};
  color: ${(p) => p.$c || "#111"};
  line-height: 1;
  display: flex;
`;
const VLabel = styled(Label)`
  transform: translate(-50%, -50%) rotate(-90deg);
`;
const T = ({ x, y, w, s, b, c, children }) => (
  <Label $x={x} $y={y} $s={s} $bold={b} $c={c}><Fit w={w}>{children}</Fit></Label>
);
const MapArt = styled.svg`
  position: absolute;
  left: ${(p) => p.$x}px;
  top: ${(p) => p.$y}px;
  overflow: visible;
`;
const Guide = styled.div`
  position: absolute;
  left: 1320px;
  top: 153px;
  width: 1px;
  height: 820px;
  background: repeating-linear-gradient(#00f0f8 0 2px, #a8fbfd 2px 3px);
`;
const VScroll = styled.div`
  grid-column: 3;
  grid-row: 1 / 3;
  border-left: 2px solid #f9f9f9;
  padding: 182px 0 0 8px;
  &::before { content: ""; display: block; width: 3px; height: 548px; background: #8f8f8f; border-radius: 2px; }
`;
const ViewFoot = styled.div`
  grid-column: 1 / 4;
  display: flex;
  align-items: center;
  padding: 0 135px 7px 3px;
  border-top: 2px solid #fafafa;
`;
const ActiveView = styled.span`
  width: 21px;
  height: 20px;
  margin: 0 2px 0 6px;
  border-radius: 3px;
  background: #cfe6fa;
  border: 1px solid #a9d2f5;
  display: flex;
  align-items: center;
  justify-content: center;
`;
const FootIcon = styled.span`
  margin-left: ${(p) => p.$g}px;
`;
const HThumb = styled.span`
  flex: 1;
  height: 3px;
  margin-left: 26px;
  background: #8f8f8f;
  border-radius: 2px;
`;
const RightRail = styled.div`
  width: 29px;
  background: #fafafa;
  padding: 3px 0 0 4px;
  display: flex;
  flex-direction: column;
`;
const RailTab = styled.div`
  height: ${(p) => p.$h}px;
  margin-top: ${(p) => p.$g || 0}px;
  border: 1px solid #9c9c9c;
  border-right: 0;
  border-radius: 5px 0 0 5px;
  background: #f0f0f0;
  padding: 4px 0 0 1px;
  display: flex;
  flex-direction: column;
  gap: 5px;
`;
const RailText = styled.span`
  writing-mode: vertical-rl;
  font: 15px/20px ${ARIAL};
  letter-spacing: ${(p) => p.$ls}px;
  color: #6a6a6a;
`;

const dots = [[1211, 296], [1210, 302], [1209, 308], [1206, 318], [1205, 325], [1263, 299], [1227, 323], [1226, 333], [1256, 339], [1247, 353], [1261, 373], [1243, 369], [1236, 375], [1218, 380], [1215, 392], [1243, 381], [1240, 398], [1237, 400], [1249, 399], [1264, 389], [1264, 395], [1263, 400], [1242, 598], [1240, 605], [1227, 681], [1226, 688], [1203, 726], [1201, 741], [1267, 736], [995, 773], [995, 778], [1115, 773], [1114, 781], [1076, 783], [1075, 790], [1195, 771], [1194, 778], [1228, 775], [1227, 784]];

function MapFrame() {
  return (
    <MapArt $x={718} $y={278} width="551" height="516" viewBox="718 278 551 516" fill="none">
      <defs>
        <clipPath id="mapClip"><rect x="718" y="292" width="551" height="502" /></clipPath>
        <filter id="grain" x="0" y="0" width="100%" height="100%">
          <feTurbulence type="fractalNoise" baseFrequency="0.180" numOctaves="3" seed="4" result="n" />
          <feColorMatrix in="n" type="matrix" values="0 0 0 0 0.040  0 0 0 0 0.250  0 0 0 0 0.270  1.400 0 0 0 -0.500" result="m" />
          <feComposite in="m" in2="SourceGraphic" operator="in" result="k" />
          <feMerge><feMergeNode in="SourceGraphic" /><feMergeNode in="k" /></feMerge>
        </filter>
        <filter id="mottle" x="0" y="0" width="100%" height="100%">
          <feTurbulence type="fractalNoise" baseFrequency="0.220" numOctaves="2" seed="9" result="n" />
          <feColorMatrix in="n" type="matrix" values="0 0 0 0 1  0 0 0 0 0.850  0 0 0 0 0.820  0 2.600 0 0 -1.250" result="m" />
          <feComposite in="m" in2="SourceGraphic" operator="in" result="k" />
          <feMerge><feMergeNode in="SourceGraphic" /><feMergeNode in="k" /></feMerge>
        </filter>
        <filter id="soft"><feGaussianBlur stdDeviation="3" /></filter>
      </defs>
      <g clipPath="url(#mapClip)">
        <rect x="718" y="292" width="551" height="502" fill="#1d1a20" />
        <rect x="1190" y="292" width="80" height="115" fill="#1e0d12" />
        <path d="M1190 560h60l-30 130-60 104h-200v-50h200z" fill="#10212a" opacity=".8" filter="url(#soft)" />
        <path d="M718 292h4v90h-4z" fill="#8a3020" /><path d="M718 310h4v90h-4z" fill="#2aa5a5" /><path d="M718 400h4v220h-4z" fill="#3a4046" />
        <ellipse cx="1204" cy="351" rx="27" ry="27" fill="#165a60" filter="url(#soft)" />
        <path d="M1185 450C1202 422 1225 401 1272 399V541C1262 570 1240 589 1212 584L1190 574Z" fill="#1a6a70" filter="url(#soft)" />
        <g filter="url(#grain)">
          <ellipse cx="1204" cy="351" rx="22" ry="22" fill="#1b7a7c" />
          <path d="M1190 450C1205 427 1225 408 1270 405V535C1260 562 1240 580 1215 577L1190 567Z" fill="#33cfca" />
          <path d="M735 745C745 770 752 790 770 794L835 794C880 788 950 782 1035 752L1035 745Z" fill="#26c4c6" />
        </g>
        <path d="M1201 449C1210 420 1240 405 1269 407" stroke="#5b7474" strokeWidth="5" opacity=".6" />
        <path d="M775 794c80-6 180-16 260-42" stroke="#567b7c" strokeWidth="4" opacity=".8" />
        <path d="M800 757c60 14 120 3 170-3" stroke="#0e5c66" strokeWidth="9" opacity=".35" strokeDasharray="5 2 11 3 3 1" filter="url(#grain)" />
        <path d="M1243 417l14 1 12 4" stroke="#f3d9a0" strokeWidth="4" /><path d="M1243 415l14 2 12 7" stroke="#ffff00" strokeWidth="1.500" strokeDasharray="5 1" />
        <path d="M1201 447l3 3 4-3 2 5 5-2 3 5 5 4 0 5 4 4-2 6 5 5-2 5 2 6-4 4 1 6-5 3 1 6-5 4-2 5-6 2-3 5-8 2z" fill="#f04c38" filter="url(#mottle)" />
        <path d="M1201 447l3 3 4-3 2 5 5-2 3 5 5 4 0 5 4 4-2 6 5 5-2 5 2 6-4 4 1 6-5 3 1 6-5 4-2 5-6 2-3 5-8 2" stroke="#ffff00" strokeWidth="1.800" />
        <path d="M1200 504l7-6 5 4-3 8 6 4-6 6-9 1z" fill="#ffe3dc" stroke="#ffff00" strokeWidth="1" />
        <path d="M1199 470h4v45h-4z" fill="#e5e000" />
        <path d="M1209 577l2-55 8-7 9 5-6 14-4 42z" fill="#33c9c2" stroke="#fbe9c0" strokeWidth="3.500" /><path d="M1211 578l2-56 7-6 8 6-6 13-4 42" stroke="#ffff00" strokeWidth="1.500" /><path d="M1207 578l1-58 10-8 13 6-6 17-4 42" stroke="#ffff00" strokeWidth="1.500" />
        <path d="M1262 519l-24 43" stroke="#a8b8b2" strokeWidth="2" /><path d="M1261 529l-17 36" stroke="#ffff00" strokeWidth="3" strokeDasharray="8 2" />
        <path d="M1200 343c9 3 12 9 13 17" stroke="#fff0a8" strokeWidth="4" /><path d="M1198 343c9 2 12 9 13 19" stroke="#ffff00" strokeWidth="1.500" />
        <path d="M776 748l22 8-1 9-11 3-9-9z" fill="#f04c38" stroke="#e8d800" strokeWidth="1.500" /><path d="M788 757v9M792 757v8" stroke="#e8d800" />
        <path d="M768 752l-10 36M771 752l-7 34M775 752l-9 42" stroke="#f4d030" strokeWidth="2" /><path d="M769 754l-9 34M773 754l-8 34" stroke="#e2412e" strokeWidth="1.200" />
        <path d="M1127 754l-3 18M1124 774l-4 20" stroke="#ffff00" strokeWidth="2" strokeDasharray="6 1" />
        <path d="M718 387h551M718 507h551M718 627h551M718 747h551M728 292v502M848 292v502M968 292v502M1088 292v502M1208 292v502" stroke="#6a6a6a" strokeWidth="1.300" />
        {dots.map(([x, y], i) => <rect key={i} x={x} y={y} width="2" height={y > 580 || i < 5 ? 5 : 2} fill="#ffff00" />)}
        <path d="M1267 292v502" stroke="#aaa" strokeWidth="1.500" />
      </g>
      <rect x="718.500" y="292.500" width="550" height="501" stroke="#111" strokeWidth="1.500" />
      <path d="M1208 286v6M728 794v3M848 794v3M968 794v3M1088 794v3M1208 794v3M714 387h4M714 507h4M714 627h4M714 747h4M1269 387h3M1269 507h3M1269 627h3M1269 747h3" stroke="#222" strokeWidth="1.300" />
    </MapArt>
  );
}

const bands = [["#ff0000", "Red:     Band 4"], ["#00ff00", "Green:  Band 2"], ["#0000ff", "Blue:    Band 1"]];
const BandLegend = ({ x, y }) => (
  <>
    <T x={x} y={y} w={81} s={11} b>Pulau Panggang</T>
    <T x={x} y={y + 15} w={20} s={9} b>RGB</T>
    {bands.map(([c, t], i) => (
      <React.Fragment key={c}>
        <Frame $x={x} $y={y + 25 + i * 15.3} $w={23} $h={12} $f={c} $b="1px solid #666" />
        <T x={x + 26} y={y + 30.5 + i * 15.3} w={[51, 52, 49][i]} s={7.5} c="#444">{t}</T>
      </React.Fragment>
    ))}
  </>
);

const Emblem = () => (
  <MapArt $x={1316} $y={742} width="52" height="52" viewBox="-26 -26 52 52" fill="none">
    <g stroke="#2d6d98" strokeWidth="1.200">
      <circle r="23.500" strokeDasharray="3 3" /><circle r="20" strokeDasharray="2 4" strokeWidth="1.600" />
      <circle r="13" strokeDasharray="3 2" strokeWidth="2" />
      {Array.from({ length: 12 }, (_, i) => <ellipse key={i} cy="-9" rx="3.500" ry="7" transform={`rotate(${i * 30})`} strokeDasharray="2 2" />)}
      <path d="M0 3v20M-12 20C-24 14-20 4-12 6M12 20C24 14 20 4 12 6" strokeWidth="2" strokeDasharray="4 1" />
    </g>
    <circle r="4" fill="#2d6d98" opacity=".6" />
  </MapArt>
);

function PageContent() {
  const title = "PETA GARIS PANTAI DIGITAL NDWI KOMPOSIT CITRA";
  const info = "#444";
  return (
    <PageLayer>
      <T x={864} y={169.5} w={655} s={26} b c="#000">{title}</T>
      <Frame $x={685} $y={197} $w={891} $h={629} />
      <Frame $x={694} $y={210} $w={879} $h={618} $b="1px solid #222" />
      <Frame $x={694} $y={210} $w={879} $h={3} $b="0" $f="#444" />
      <Frame $x={698} $y={212} $w={866} $h={61} $b="1px solid #888" />
      <T x={800} y={239.500} w={654} s={26} b c="#000">{title}</T>
      <Frame $x={799} $y={226} $w={659} $h={31} $b="2px dashed #66dede" />
      <Frame $x={700} $y={278} $w={594} $h={536} />
      <MapFrame />
      <T x={716} y={284} w={12} s={8} b c="#555">10</T>
      <T x={1200} y={284} w={30} s={8} b c="#444">4000mT</T>
      {[728, 848, 968, 1088, 1208].map((x, i) => (
        <T key={x} x={x - 11} y={801.5} w={22} s={8} b c="#222">{`${10 + i}000`}</T>
      ))}
      <T x={741} y={803} w={10} s={7} b c="#444">mT</T>
      <T x={1221} y={803} w={10} s={7} b c="#444">mT</T>
      {[708, 1277].map((x) => (
        <React.Fragment key={x}>
          <VLabel $x={x} $y={379} $s={8} $bold $c="#222"><Fit w={46}>9364000 mU</Fit></VLabel>
          <VLabel $x={x} $y={506} $s={8} $bold $c="#222"><Fit w={32}>9363000</Fit></VLabel>
          <VLabel $x={x} $y={626} $s={8} $bold $c="#222"><Fit w={32}>9362000</Fit></VLabel>
          <VLabel $x={x} $y={739} $s={8} $bold $c="#222"><Fit w={46}>9361000 mU</Fit></VLabel>
        </React.Fragment>
      ))}
      <Frame $x={1305} $y={278} $w={259} $h={534} />
      {[374, 514, 595, 668, 724].map((y) => <Frame key={y} $x={1305} $y={y} $w={258} $h={1} $b="0" $f="#111" />)}
      <T x={1425} y={295} w={8} s={12} b c="#333">U</T>
      <MapArt $x={1417} $y={303} width="24" height="24" viewBox="-12 -12 24 24" fill="none">
        <circle r="11.500" fill="#000" /><path d="M0-9l5.500 9H2.500v11h-5V0h-3z" fill="#fff" />
      </MapArt>
      <T x={1406} y={339} w={40} s={10} c="#222">1:25.000</T>
      <Frame $x={1340} $y={354} $w={181} $h={5} $b="0" $f="#000" />
      <Frame $x={1361} $y={355} $w={19} $h={3} $b="0" $f="#fff" />
      <Frame $x={1401} $y={355} $w={59} $h={3} $b="0" $f="#fff" />
      <T x={1522} y={355} w={12} s={7.500} c="#222">Km</T>
      <T x={1338} y={364} w={4} s={7.500} c="#222">0</T>
      <T x={1362} y={364} w={15} s={7.500} c="#222">0,25</T>
      <T x={1395} y={364} w={11} s={7.500} c="#222">0,5</T>
      <T x={1458} y={364} w={4} s={7.500} c="#222">1</T>
      <T x={1515} y={364} w={11} s={7.500} c="#222">1,5</T>

      <T x={1320} y={389} w={60} s={14.500} b>Legenda</T>
      <T x={1320} y={406} w={73} s={12.500} b>Garis Pantai</T>
      <Frame $x={1320} $y={423} $w={20} $h={1} $b="0" $f="#e8e800" />
      <T x={1346} y={423} w={52} s={9} c="#666">Garis Pantai</T>
      <BandLegend x={1320} y={438} />

      <T x={1321} y={530} w={151} s={11.500} b>Sistem Koordinat Referensi</T>
      <T x={1320} y={553} w={40} s={10} c={info}>Proyeksi</T>
      <T x={1383} y={553} w={148} s={10} c={info}>: Universal Transverse Mercator</T>
      <T x={1320} y={565.500} w={53} s={10} c={info}>Datum Grid</T>
      <T x={1383} y={565.500} w={97} s={10} c={info}>: UTM dan Geografis</T>
      <T x={1320} y={577} w={30} s={10} c={info}>Datum</T>
      <T x={1383} y={577} w={105} s={10} c={info}>: WGS 1984 Zona 49S</T>
      <T x={1321} y={611} w={49} s={11.500} b>Sumber :</T>
      <T x={1321} y={640.500} w={205} s={10} c={info}>1. Data Citra Planet Scope Pulau Panggang</T>
      <T x={1320} y={681} w={76} s={11.500} b>Disusun oleh:</T>
      <T x={1320} y={697} w={27} s={10} c={info}>Nama</T>
      <T x={1371} y={697} w={113} s={10} c={info}>: Anggita Cahyaningtyas</T>
      <T x={1320} y={709} w={18} s={10} c={info}>NIM</T>
      <T x={1371} y={709} w={105} s={10} c={info}>: 20/464121/SV/18440</T>
      <Emblem />
      <T x={1374} y={748} w={172} s={9} b>D-IV SISTEM INFORMASI GEOGRAFIS</T>
      <T x={1374} y={759.500} w={177} s={9} b>DEPARTEMEN TEKNOLOGI KEBUMIAN</T>
      <T x={1375} y={769.500} w={84} s={9} b>SEKOLAH VOKASI</T>
      <T x={1374} y={781} w={136} s={9} b>UNIVERSITAS GADJAH MADA</T>
      <T x={1374} y={792} w={20} s={9} b>2022</T>
      <BandLegend x={1344} y={893} />
      <T x={1598} y={479} w={43} s={11.500} b>Legend</T>
      <T x={1633} y={599} w={43} s={11.500} b>Legend</T>
      <Guide />
    </PageLayer>
  );
}

/* ---------- properties dialog ---------- */
const Dialog = styled.div`
  position: absolute;
  left: 721px;
  top: 258px;
  width: 480px;
  height: 496px;
  border-radius: 9px;
  background: #f0f0f0;
  border: 1px solid #b5b5b5;
  box-shadow: 0 26px 50px 4px rgba(0, 0, 0, 0.3), 0 4px 16px rgba(0, 0, 0, 0.14);
  font-family: ${ARIAL};
  font-size: 14.5px;
  color: #222;
  display: flex;
  flex-direction: column;
`;
const DTitle = styled.div`
  height: 38px;
  background: #fff;
  border-radius: 9px 9px 0 0;
  display: flex;
  align-items: center;
  justify-content: space-between;
  padding: 0 14px 0 13px;
  font-family: ${UI};
  color: #000;
`;
const DTabs = styled.div`
  height: 34px;
  padding: 9px 0 0 7px;
  display: flex;
  align-items: flex-end;
`;
const DTab = styled.div`
  width: ${(p) => p.$w}px;
  height: ${(p) => (p.$on ? 26 : 23)}px;
  margin-bottom: ${(p) => (p.$on ? -1 : 0)}px;
  background: ${(p) => (p.$on ? "#f9f9f9" : "#f3f3f3")};
  border: 1px solid #e2e2e2;
  border-bottom: 0;
  z-index: 1;
  display: flex;
  align-items: center;
  padding: 0 0 ${(p) => (p.$on ? 3 : 0)}px ${(p) => (p.$on ? 9 : 5)}px;
`;
const DPanel = styled.div`
  width: 461px;
  height: 377px;
  margin-left: 7px;
  border: 1px solid #e4e4e4;
  background: #f9f9f9;
  padding: 13px 15px 0 17px;
  display: flex;
  flex-direction: column;
`;
const Area = styled.div`
  height: 155px;
  margin-top: 6px;
  background: #fff;
  border: 1px solid #ececec;
  border-bottom: 2px solid #0067c0;
  display: flex;
  justify-content: space-between;
  padding-left: 3px;
`;
const AreaText = styled.div`
  display: flex;
  align-items: center;
  height: 22px;
  &::after { content: ""; width: 1px; height: 16px; background: #000; }
`;
const AreaScroll = styled.div`
  width: 20px;
  margin: 1px 2px 0 0;
  background: #f0f0f0;
  display: flex;
  flex-direction: column;
  align-items: center;
  justify-content: space-between;
  padding: 8px 0 7px;
`;
const Tri = styled.span`
  width: ${(p) => p.$s || 11}px;
  height: ${(p) => (p.$s ? 4 : 8)}px;
  background: ${(p) => p.$c || "#a0a0a0"};
  clip-path: ${(p) => (p.$up ? "polygon(50% 0, 100% 100%, 0 100%)" : "polygon(0 0, 100% 0, 50% 100%)")};
`;
const FRow = styled.div`
  height: ${(p) => p.$h}px;
  margin-top: ${(p) => p.$mt}px;
  display: flex;
  align-items: center;
`;
const Field = styled.div`
  width: ${(p) => p.$w}px;
  height: 28px;
  margin-left: ${(p) => p.$ml}px;
  background: ${(p) => p.$bg || "#fff"};
  border: 1px solid #e6e6e6;
  border-bottom: 1.500px solid #888;
  display: flex;
  align-items: center;
  justify-content: space-between;
  padding: 0 0 3px 3px;
`;
const Spin = styled.span`
  width: 22px;
  height: 28px;
  margin: 2px -1px 0 0;
  flex: none;
  display: grid;
  grid-template-rows: 1fr 1fr;
  gap: 1px;
  padding: 1px;
  background: #cfcfcf;
  border: 1px solid #b8b8b8;
`;
const SpinBtn = styled.span`
  background: #ededed;
  border: 1px solid #a9a9a9;
  display: flex;
  align-items: center;
  justify-content: center;
`;
const Num = ({ ml }) => (
  <Field $w={75} $ml={ml}><Fit w={27}>0,00</Fit><Spin><SpinBtn><Tri $s={7} $c="#111" $up /></SpinBtn><SpinBtn><Tri $s={7} $c="#111" /></SpinBtn></Spin></Field>
);
const AlignBtn = styled.span`
  width: 30px;
  height: 32px;
  margin-left: ${(p) => p.$ml}px;
  background: ${(p) => (p.$on ? "#cce6fc" : "#f3f3f3")};
  border: 1px solid ${(p) => (p.$on ? "#9fd0f7" : "#f3f3f3")};
  border-radius: 4px;
  display: flex;
  align-items: center;
  justify-content: center;
`;
const alignSpans = {
  left: [[0, 18], [0, 13], [0, 18], [0, 12], [0, 18], [0, 12]],
  center: [[0, 18], [3, 15], [0, 18], [3, 15], [0, 18], [4, 14]],
  right: [[0, 18], [5, 18], [0, 18], [6, 18], [2, 18], [6, 18]],
  full: [[0, 18], [0, 18], [0, 18], [0, 18], [0, 18], [0, 18]],
};
const Align = ({ k, on, ml }) => (
  <AlignBtn $on={on} $ml={ml}>
    <Svg width="18" height="16" viewBox="0 0 18 16" fill="none">
      {alignSpans[k].map(([a, b], i) => <path key={i} d={`M${a} ${1 + i * 2.8}H${b}`} stroke="#111" strokeWidth="1.600" />)}
    </Svg>
  </AlignBtn>
);
const Button = styled.span`
  width: ${(p) => p.$w}px;
  height: 26px;
  background: #fdfdfd;
  border: ${(p) => (p.$primary ? "1.500px solid #2179c8" : "1px solid #cfcfcf")};
  border-radius: 4px;
  display: flex;
  align-items: center;
  justify-content: center;
`;
const Link = styled.span`
  color: #1616ee;
  border-bottom: 1px solid #1616ee;
  display: flex;
  height: 16px;
  margin-bottom: 8px;
`;
const DFoot = styled.div`
  display: flex;
  justify-content: flex-end;
  gap: 10px;
  padding: 11px 9px 0 0;
`;

function PropertiesDialog() {
  return (
    <Dialog>
      <DTitle>
        <Fit w={67}>Properties</Fit>
        <Svg width="13" height="13" viewBox="0 0 13 13" fill="none"><path d="M1 1l11 11M12 1L1 12" stroke="#111" strokeWidth="1.200" /></Svg>
      </DTitle>
      <DTabs>
        <DTab $on $w={56}><Fit w={25}>Text</Fit></DTab>
        <DTab $w={112}><Fit w={101}>Size and Position</Fit></DTab>
      </DTabs>
      <DPanel>
        <Fit w={29}>Text:</Fit>
        <Area>
          <AreaText><Fit w={348}>PETA GARIS PANTAI DIGITAL NDWI KOMPOSIT CITRA</Fit></AreaText>
          <AreaScroll><Tri $up /><Tri /></AreaScroll>
        </Area>
        <FRow $h={32} $mt={7}>
          <Fit w={30}>Font:</Fit>
          <Field $w={222} $ml={15} $bg="#f8f8f8"><Fit w={63}>Arial 24,00</Fit></Field>
          <Align k="left" ml={16} /><Align k="center" on ml={8} /><Align k="right" ml={7} /><Align k="full" ml={8} />
        </FRow>
        <FRow $h={28} $mt={13}>
          <Fit w={37}>Angle:</Fit><Num ml={8} />
          <Slot $g={91}><Fit w={114}>Character Spacing:</Fit></Slot><Num ml={9} />
        </FRow>
        <FRow $h={28} $mt={15}>
          <Slot $g={212}><Fit w={51}>Leading:</Fit></Slot><Num ml={71} />
        </FRow>
        <FRow $h={26} $mt={21}>
          <Link><Fit w={121}>About formatting text</Fit></Link>
          <Slot $g={132}><Button $w={173}><Fit w={104}>Change Symbol...</Fit></Button></Slot>
        </FRow>
      </DPanel>
      <DFoot>
        <Button $primary $w={92}><Fit w={20}>OK</Fit></Button>
        <Button $w={91}><Fit w={42}>Cancel</Fit></Button>
        <Button $w={91}><Fit w={33}>Apply</Fit></Button>
      </DFoot>
    </Dialog>
  );
}

/* ---------- status + taskbar ---------- */
const Status = styled.div`
  flex: none;
  height: 25px;
  display: flex;
  align-items: center;
  padding-left: 4px;
  color: #222;
  border-top: 2px solid #f8f8f8;
`;
const StatusCell = styled.span`
  width: ${(p) => p.$w}px;
  height: 23px;
  margin-left: ${(p) => p.$g || 0}px;
  border: 1px solid #f5f5f5;
`;
const Taskbar = styled.div`
  flex: none;
  height: 60px;
  background: linear-gradient(90deg, #1e2a36 0, #1e232f 8%, #1e222e 60%, #1d2a38 100%);
  display: flex;
  align-items: center;
  color: #fff;
  font-size: 14.5px;
`;
const Weather = styled.div`
  display: flex;
  align-items: center;
  gap: 10px;
  width: 548px;
  padding-left: 25px;
`;
const Stack = styled.div`
  display: flex;
  flex-direction: column;
  gap: 5px;
  padding-bottom: 1px;
  align-items: ${(p) => (p.$end ? "flex-end" : "flex-start")};
`;
const Dim = styled.span`
  color: #c9ccd2;
  display: flex;
`;
const TaskSlot = styled.div`
  width: 55.1px;
  height: 60px;
  display: flex;
  align-items: center;
  justify-content: center;
  position: relative;
`;
const Active = styled.span`
  width: 48px;
  height: 50px;
  border-radius: 5px;
  background: #2c323d;
  border: 1px solid #3a414c;
  display: flex;
  align-items: center;
  justify-content: center;
`;
const Dot = styled.i`
  position: absolute;
  bottom: 6px;
  width: ${(p) => (p.$wide ? 20 : 7)}px;
  height: 4px;
  border-radius: 2px;
  background: #9a9da3;
`;
const Tray = styled.div`
  margin-left: auto;
  display: flex;
  align-items: center;
  padding-right: 24px;
`;
const Bell = styled.span`
  width: 20px;
  height: 20px;
  margin-left: 11px;
  border-radius: 50%;
  background: #aaa8a4;
  color: #222;
  font-size: 13px;
  display: flex;
  align-items: center;
  justify-content: center;
`;
const TS = ({ children }) => <Svg width="30" height="30" viewBox="0 0 30 30" fill="none">{children}</Svg>;

const apps = [
  ["start", 0, <TS key="a"><defs><linearGradient id="wn" x1="0" y1="0" x2="1" y2="1"><stop stopColor="#8be0ff" /><stop offset="1" stopColor="#0a8ff0" /></linearGradient></defs><path d="M0 .5h14.300v14H0zM15.500.5H30v14H15.500zM0 15.700h14.300v14H0zM15.500 15.700H30v14H15.500z" fill="url(#wn)" /></TS>],
  ["search", 0, <TS key="a"><circle cx="16.500" cy="13" r="10.500" fill="#454a55" stroke="#e8e8e8" strokeWidth="2.400" /><path d="M9.500 21L3 28" stroke="#cfcfcf" strokeWidth="3" /></TS>],
  ["tasks", 0, <TS key="a"><path d="M8 1h22v20H8z" fill="#f2f2f2" /><path d="M0 8h22v20H0z" fill="#6e6e6e" /><path d="M8 8h14v13H8z" fill="#bdbdbd" /></TS>],
  ["chat", 0, <TS key="a"><path d="M15 1a14 14 0 1 1-8 25.500L1 28V15A14 14 0 0 1 15 1z" fill="#6a5fc8" /><path d="M1 15A14 14 0 0 1 15 1c-4 4-2 12-14 14z" fill="#8f6cc0" /><rect x="7" y="9.500" width="12" height="11" rx="2" fill="#fff" /><path d="M20 13l4-3v10l-4-3z" fill="#fff" /></TS>],
  ["music", 0, <TS key="a"><circle cx="15" cy="15" r="14.500" fill="#1fd662" /><path d="M6 10.500c6-2 13-1.500 18 1.500M7 15.500c5-1.600 11-1 15.500 1.500M8 20c4-1.300 9-.8 12.500 1.300" stroke="#10181a" strokeWidth="2.500" strokeLinecap="round" /></TS>],
  ["edge", 0, <TS key="a"><circle cx="15" cy="15" r="14.500" fill="#1877d2" /><path d="M1 13C3 4 10 .5 15 .5c9 0 14.500 6 14.500 12 0 5-4 7-8 7-3 0-4-1.500-3-3 2-3 0-7-5-7C7 9.500 2 12 1 13z" fill="#35c4b8" /><path d="M22 3c5 3 7.500 6 7.500 10 0 4-4 6.500-8 6.500 6-4 5-11 .5-16.500z" fill="#5fe070" /><path d="M13 29C5 27 6 14 14 13c-2 6 1 11 12 10-3 5-8 7-13 6z" fill="#0c4f9e" /></TS>],
  ["files", 1, <TS key="a"><path d="M0 2h11l3 4v6H0z" fill="#d9971c" /><path d="M0 6h30v22H0z" fill="#fccb45" /><path d="M5 28v-5l2-2h16l2 2v5z" fill="#1878cc" /><path d="M10 24.500h10" stroke="#0d5796" strokeWidth="1.500" /></TS>],
  ["snip", 0, <TS key="a"><rect x="0" y="0" width="25" height="22" rx="3" fill="#f2f2f2" /><path d="M4 4h14v12H4z" stroke="#d8391f" strokeWidth="2.200" strokeDasharray="3 2" /><path d="M21 4v14M15 24l5-9" stroke="#aaa" strokeWidth="2.500" /><circle cx="14" cy="25.500" r="3" stroke="#2b8fe0" strokeWidth="2" /><circle cx="25" cy="18" r="3" stroke="#2b8fe0" strokeWidth="2" /></TS>],
  ["chrome", 1, <TS key="a"><circle cx="15" cy="15" r="13.500" fill="#32a350" /><path d="M3 9A13.500 13.500 0 0 1 27 9L15 15z" fill="#e33b2e" /><path d="M28 11a13.500 13.500 0 0 1-13 17.500l6-10L15 9h12z" fill="#fbc116" /><circle cx="15" cy="15" r="6.500" fill="#3d7ff0" stroke="#fff" strokeWidth="1.800" /><circle cx="26" cy="4" r="9" fill="#a9b7cc" /><path d="M18 6c5-4 11-3 16-1-2 9-12 11-16 1z" fill="#5f6c58" /></TS>],
  ["arcmap", 2, <Icon key="a" n="arcmap" s={30} />],
  ["word", 1, <TS key="a"><path d="M6 1h24v28H6z" fill="#1c5fc0" /><path d="M6 1h24v8H6z" fill="#45a5ee" /><path d="M6 9h24v7H6z" fill="#2b80da" /><rect x="0" y="7" width="15" height="16" rx="1.500" fill="#1849a0" /><text x="7.500" y="19.500" fontSize="12" fontWeight="bold" fill="#fff" textAnchor="middle" fontFamily="Liberation Sans">W</text></TS>],
  ["notes", 1, <TS key="a"><path d="M4 2h23v26H4z" fill="#52c3e0" /><path d="M4 26h23v3H4z" fill="#c9702f" /><path d="M7 0v4M11 0v4M15.500 0v4M20 0v4M24 0v4" stroke="#1c5f78" strokeWidth="1.800" /><path d="M9 9h14M9 14h14M9 19h10" stroke="#155e7c" strokeWidth="2" /></TS>],
  ["pdf", 1, <TS key="a"><path d="M0 0h23l7 7v23H0z" fill="#f68a1e" /><path d="M23 0l7 7h-7z" fill="#2b2b2b" /><path d="M20 5C9 5 5 12 8 18c4 6 13 2 13-5h-6l-2 3h4c-2 3-6 2-6-1 0-4 5-8 9-10z" fill="#fff" /><text x="15" y="28" fontSize="7" fontWeight="bold" fill="#fff" textAnchor="middle" fontFamily="Liberation Sans">PDF</text></TS>],
  ["telegram", 1, <TS key="a"><circle cx="15" cy="15" r="13.800" fill="#29a0dc" /><path d="M6 15l17-7-3 15-5-4-3 3-.5-5z" fill="#fff" /><rect x="17" y="0" width="19" height="14" rx="7" fill="#ee3a37" /><text x="26.500" y="11" fontSize="9.500" fill="#fff" textAnchor="middle" fontFamily="Liberation Sans">..48</text></TS>],
  ["photos", 1, <TS key="a"><rect x="1" y="1" width="28" height="28" rx="1.500" fill="#2ba4ea" /><path d="M15 20l6-7 8 9v7H10z" fill="#6f7fe0" /><path d="M1 20L10 11l17 18H1z" fill="#174f9e" /><circle cx="20" cy="8" r="2.800" fill="#fff" /></TS>],
];

const hNums = Array.from({ length: 29 }, (_, i) => i + 1);
const vNums = Array.from({ length: 20 }, (_, i) => 20 - i);
const menu = [["File", 23], ["Edit", 24], ["View", 32], ["Bookmarks", 74], ["Insert", 36], ["Selection", 60], ["Geoprocessing", 97], ["Customize", 71], ["Windows", 61], ["Help", 32]];

export default function App() {
  return (
    <Shell>
      <Global />
      <TitleBar>
        <Icon n="arcmap" />
        <Fit w={142}>Layout.mxd - ArcMap</Fit>
        <WinButtons>
          {["M1 6.500h12", "M1 3.500h9v9h-9zM4 3V1h9v9h-2.500", "M1 1l12 12M13 1L1 13"].map((d) => (
            <Svg key={d} width="12" height="12" viewBox="0 0 14 14" fill="none"><path d={d} stroke="#8a8a8a" strokeWidth="1.200" /></Svg>
          ))}
        </WinButtons>
      </TitleBar>
      <Top>
        <MenuBar>{menu.map(([m, w]) => <Fit key={m} w={w}>{m}</Fit>)}</MenuBar>
        <ToolbarOne />
        <ToolbarTwo />
      </Top>
      <Main>
        <Toc>
          <TocHead>
            <Fit w={117}>Table Of Contents</Fit>
            <Slot $g={64}><Icon n="pin" s={14} /></Slot><Slot $g={5}><Icon n="closeX" s={14} /></Slot>
          </TocHead>
          <TocTools>
            <Pressed $w={27}><Icon n="tocOrder" /></Pressed>
            {I("tocSource", 4)}{I("tocVis", 7)}{I("tocSel", 8)}<Sep $g={7} />{I("tocOpt", 7)}
          </TocTools>
          <TocBox>
            <Tree>
              <TreeRow $pl={11}><Expander /><Slot $g={8}><Icon n="layers" s={19} /></Slot><Bold><Fit w={44}>Layers</Fit></Bold></TreeRow>
              <Layer label="Garis Pantai" w={77} />
              <TreeRow $pl={74}><LineSym /><EditMark /></TreeRow>
              <Layer label="RasterT_NDWI_GT1" w={122} on />
              <TreeRow $pl={74}><Swatch $c="#fff" $b="#f5f53a" /></TreeRow>
              <Layer label="Pulau Panggang" w={108} on />
              <TreeRow $pl={103}><Fit w={27}>RGB</Fit></TreeRow>
              <Sw c="#ff0000" label="Red:    Band 4" w={89} />
              <Sw c="#00ff00" label="Green: Band 2" w={91} />
              <Sw c="#0000ff" label="Blue:   Band 1" w={88} />
              <Layer label="RasterT_NDWI_GT1" w={122} />
              <Sw c="#d3dcfa" label="<all other values>" w={116} />
              <TreeRow $pl={103}><Fit w={59}>gridcode</Fit></TreeRow>
              <Sw c="#ff0000" label="0" w={8} />
              <Sw c="#73a800" label="1" w={8} />
            </Tree>
            <TocScroll />
          </TocBox>
        </Toc>
        <View>
          <HRulerWrap>
            <HRuler>
              <HCell $w={28} />
              {hNums.map((n) => <HCell key={n} $major><Slot $g={2}><Fit w={n > 9 ? 14 : 7}>{n}</Fit></Slot></HCell>)}
            </HRuler>
          </HRulerWrap>
          <VRulerWrap>
            <VRuler>
              {vNums.map((n) => <VCell key={n} $one={n < 10}><Turned><Fit w={n > 9 ? 14 : 7}>{n}</Fit></Turned></VCell>)}
              <VCell $h={24} />
            </VRuler>
          </VRulerWrap>
          <Canvas><PageContent /></Canvas>
          <VScroll />
          <ViewFoot>
            <FootIcon $g={0}><Icon n="dataView" s={13} /></FootIcon>
            <ActiveView><Icon n="layoutView" s={13} /></ActiveView>
            <Sep $g={1} />
            <FootIcon $g={9}><Icon n="refresh" s={13} /></FootIcon>
            <FootIcon $g={8}><Icon n="pause" s={13} /></FootIcon>
            <HThumb />
          </ViewFoot>
        </View>
        <RightRail>
          <RailTab $h={88}><Icon n="catalog" /><RailText $ls={0.4}>Catalog</RailText></RailTab>
          <RailTab $h={85}><Icon n="searchTab" /><RailText $ls={0.1}>Search</RailText></RailTab>
          <RailTab $h={146} $g={16}><Icon n="create" /><RailText $ls={0.1}>Create Features</RailText></RailTab>
        </RightRail>
      </Main>
      <Status>
        <Fit w={109}>Export complete</Fit>
        <StatusCell $g={979} $w={158} /><StatusCell $g={2} $w={24} /><StatusCell $g={0} $w={322} />
      </Status>
      <Taskbar>
        <Weather>
          <TS><circle cx="15" cy="11" r="10.500" fill="#f9a51c" /><path d="M8 26a7 7 0 0 1-1-12c1-5 5-8 9-7 4 0 7 3 7.500 7a6 6 0 0 1 0 12z" fill="#b9bcc2" /><path d="M11 27h11l-4 2.500z" fill="#e87a10" /></TS>
          <Stack><Fit w={30}>80°F</Fit><Dim><Fit w={33}>Haze</Fit></Dim></Stack>
        </Weather>
        {apps.map(([k, s, el]) => (
          <TaskSlot key={k}>{s === 2 ? <Active>{el}</Active> : el}{s > 0 && <Dot $wide={s === 2} />}</TaskSlot>
        ))}
        <Tray>
          <Svg width="145" height="24" viewBox="0 0 145 24" fill="none" style={{ marginRight: 19 }}>
            <path d="M1 16l7-8 7 8" stroke="#eee" strokeWidth="1.500" />
            <path d="M33 19a5 5 0 0 1-.5-9.500C34 5 42 4 44 9c5 0 7 8 1 10z" fill="#e9e9e9" />
            <path d="M63.500 9.500c6-6 14-6 20 0M66 13c5-4 10-4 15 0M69 16c3-2.500 6-2.500 9 0" stroke="#fff" strokeWidth="1.600" /><circle cx="73.500" cy="19" r="1.800" fill="#fff" />
            <path d="M94 9.500h3.500L102 5v14l-4.500-4.500H94zM105 9c2 2 2 4 0 6" stroke="#fff" strokeWidth="1.500" /><path d="M108 7c3 3 3 7 0 10M111 5c4 4 4 10 0 14" stroke="#777" strokeWidth="1.300" />
            <rect x="124" y="6.500" width="17" height="11.500" rx="2.500" stroke="#fff" strokeWidth="1.500" /><rect x="127" y="9.500" width="11" height="5.500" fill="#fff" /><path d="M143 10v4" stroke="#fff" strokeWidth="2" />
          </Svg>
          <Stack $end><Fit w={28}>7:48</Fit><Fit w={77}>06/09/2022</Fit></Stack>
          <Bell>1</Bell>
        </Tray>
      </Taskbar>
      <PropertiesDialog />
    </Shell>
  );
}
